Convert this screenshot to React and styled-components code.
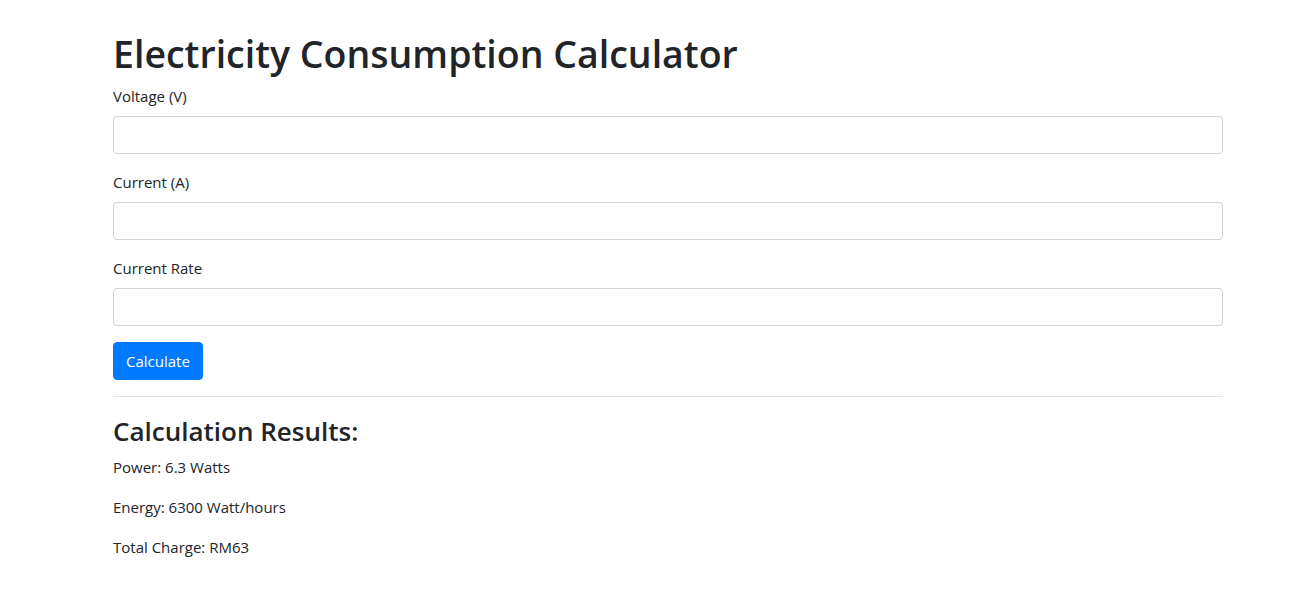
import React from 'react'
import styled, { createGlobalStyle } from 'styled-components'

const GlobalStyle = createGlobalStyle`
    body {
        margin: 0;
        background: #fff;
        color: #212529;
        font-family: "Open Sans", "Noto Sans", sans-serif;
        font-size: 16px;
        line-height: 1.5;
    }
    * { box-sizing: border-box; }
`

const Container = styled.div`
    width: 1110px;
    margin-left: 113px;
    padding-top: 30px;
`

const Title = styled.h1`
    font-size: 37.5px;
    font-weight: 600;
    line-height: 48px;
    margin: 0 0 6px;
`

const Group = styled.div`
    margin-bottom: 16px;
`

const Label = styled.label`
    display: block;
    margin-bottom: 8px;
    font-size: 15px;
    line-height: 24px;
`

const Input = styled.input`
    display: block;
    width: 100%;
    height: 38px;
    padding: 6px 12px;
    border: 1px solid #ced4da;
    border-radius: 4px;
    font: inherit;
    color: #495057;
`

const Button = styled.button`
    display: block;
    height: 38px;
    padding: 6px 12px;
    background: #007bff;
    color: #fff;
    border: 1px solid #007bff;
    border-radius: 4px;
    font: inherit;
    font-size: 15px;
`

const Rule = styled.hr`
    margin: 16px 0;
    border: 0;
    border-top: 1px solid rgba(0, 0, 0, 0.1);
`

const SubTitle = styled.h3`
    font-size: 26px;
    font-weight: 600;
    line-height: 33.6px;
    padding-top: 2px;
    margin: 0 0 6px;
`

const Result = styled.p`
    margin: 0 0 16px;
    font-size: 15px;
    line-height: 24px;
`

const fields = ['Voltage (V)', 'Current (A)', 'Current Rate']

const App = () => {
    return (
        <>
            <GlobalStyle />
            <Container>
                <Title>Electricity Consumption Calculator</Title>
                {fields.map((f) => (
                    <Group key={f}>
                        <Label>{f}</Label>
                        <Input type="text" />
                    </Group>
                ))}
                <Button>Calculate</Button>
                <Rule />
                <SubTitle>Calculation Results:</SubTitle>
                <Result>Power: 6.3 Watts</Result>
                <Result>Energy: 6300 Watt/hours</Result>
                <Result>Total Charge: RM63</Result>
            </Container>
        </>
    )
}

export default App
